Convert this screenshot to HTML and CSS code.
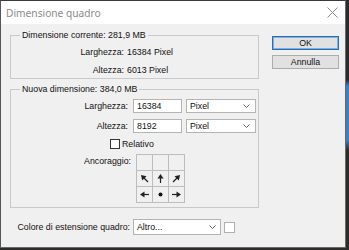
FILE: index.html
```html
<!DOCTYPE html>
<html lang="it">
<head>
<meta charset="utf-8">
<title>Dimensione quadro</title>
<link rel="stylesheet" href="styles.css">
</head>
<body>
<div class="dialog">
  <div class="titlebar">
    <span class="title">Dimensione quadro</span>
    <svg class="close" width="11" height="11" viewBox="0 0 11 11"><path d="M0.5 0.5L10.5 10.5M10.5 0.5L0.5 10.5" stroke="#8c8c8c" stroke-width="1" fill="none"/></svg>
  </div>
  <div class="content">
    <div class="main">
      <fieldset class="group g1">
        <legend>Dimensione corrente: 281,9 MB</legend>
        <div class="row"><span class="lbl">Larghezza:</span><span class="val">16384 Pixel</span></div>
        <div class="row row2"><span class="lbl">Altezza:</span><span class="val">6013 Pixel</span></div>
      </fieldset>
      <fieldset class="group g2">
        <legend>Nuova dimensione: 384,0 MB</legend>
        <div class="frow"><span class="flbl">Larghezza:</span><span class="input">16384</span><span class="select unit">Pixel<svg class="chev" width="7" height="4" viewBox="0 0 7 4"><path d="M0.5 0.5L3.5 3.5L6.5 0.5" fill="none" stroke="#606060"/></svg></span></div>
        <div class="frow frow2"><span class="flbl">Altezza:</span><span class="input">8192</span><span class="select unit">Pixel<svg class="chev" width="7" height="4" viewBox="0 0 7 4"><path d="M0.5 0.5L3.5 3.5L6.5 0.5" fill="none" stroke="#606060"/></svg></span></div>
        <div class="check"><span class="box"></span><span>Relativo</span></div>
        <div class="anchor">
          <span class="albl">Ancoraggio:</span>
          <div class="grid">
            <span class="cell"></span>
            <span class="cell"></span>
            <span class="cell"></span>
            <span class="cell"><svg width="11" height="11" viewBox="0 0 11 11"><path d="M9 9L4 4" stroke="#222" stroke-width="1.2"/><polygon points="2,2 7.5,3.2 3.2,7.5" fill="#222"/></svg></span>
            <span class="cell"><svg width="11" height="11" viewBox="0 0 11 11"><path d="M5.5 10L5.5 4" stroke="#222" stroke-width="1.2"/><polygon points="5.5,1 8.5,5.5 2.5,5.5" fill="#222"/></svg></span>
            <span class="cell"><svg width="11" height="11" viewBox="0 0 11 11"><path d="M2 9L7 4" stroke="#222" stroke-width="1.2"/><polygon points="9,2 3.5,3.2 7.8,7.5" fill="#222"/></svg></span>
            <span class="cell"><svg width="11" height="11" viewBox="0 0 11 11"><path d="M10 5.5L4 5.5" stroke="#222" stroke-width="1.2"/><polygon points="1,5.5 5.5,2.5 5.5,8.5" fill="#222"/></svg></span>
            <span class="cell"><svg width="11" height="11" viewBox="0 0 11 11"><circle cx="5.5" cy="5.5" r="2" fill="#111"/></svg></span>
            <span class="cell"><svg width="11" height="11" viewBox="0 0 11 11"><path d="M1 5.5L7 5.5" stroke="#222" stroke-width="1.2"/><polygon points="10,5.5 5.5,2.5 5.5,8.5" fill="#222"/></svg></span>
          </div>
        </div>
      </fieldset>
      <div class="ext">
        <span class="elbl">Colore di estensione quadro:</span>
        <span class="select ecolor">Altro...<svg class="chev" width="7" height="4" viewBox="0 0 7 4"><path d="M0.5 0.5L3.5 3.5L6.5 0.5" fill="none" stroke="#606060"/></svg></span>
        <span class="swatch"></span>
      </div>
    </div>
    <div class="buttons">
      <button class="btn ok" type="button">OK</button>
      <button class="btn" type="button">Annulla</button>
    </div>
  </div>
</div>
</body>
</html>
```

FILE: styles.css
```css
* { box-sizing: border-box; }
html, body { margin: 0; padding: 0; }
body {
  width: 349px;
  height: 250px;
  overflow: hidden;
  background: linear-gradient(to bottom, #2b2b2d 0, #2b2b2d 80px, #3a7fc4 86px, #3a7fc4 140px, #2e2c2b 150px, #2e2c2b 100%);
  font-family: "Liberation Sans", Arial, sans-serif;
  font-size: 8.8px;
  color: #111;
}
.dialog {
  width: 346px;
  height: 248px;
  border: 1px solid #6a6a6a;
  border-top-color: #3a3a3a;
  border-left-color: #555;
  background: #f0f0f0;
  display: flex;
  flex-direction: column;
}
.titlebar {
  height: 23px;
  flex: none;
  background: #fff;
  display: flex;
  align-items: center;
  justify-content: space-between;
  padding: 0 7px 0 5px;
}
.title {
  font-family: "Noto Sans", "Open Sans", sans-serif;
  font-size: 10.2px;
  color: #8a8a8a;
}
.close { display: block; }
.content {
  flex: 1;
  display: flex;
  padding: 6px 0 0 9px;
}
.main {
  width: 249px;
  display: flex;
  flex-direction: column;
}
.group {
  margin: 0;
  min-width: 0;
  border: 1px solid #c9c9c9;
}
.group legend {
  padding: 0 2px;
  height: 11px;
  line-height: 11px;
}
.g1 { padding: 5px 0 2px 9px; }
.row { display: flex; height: 12px; line-height: 12px; }
.row2 { margin-top: 6px; }
.lbl { width: 104px; text-align: right; }
.val { margin-left: 3px; }
.g2 { margin-top: 5px; padding: 4px 0 4px 9px; }
.frow { display: flex; align-items: center; height: 14px; }
.frow2 { margin-top: 6px; }
.flbl { width: 108px; margin-right: 5px; text-align: right; }
.input {
  width: 49px;
  height: 14px;
  line-height: 12px;
  padding-left: 3px;
  background: #fff;
  border: 1px solid #b4b4b4;
}
.select {
  display: flex;
  align-items: center;
  justify-content: space-between;
  height: 14px;
  padding: 0 5px 0 3px;
  background: #fff;
  border: 1px solid #b4b4b4;
}
.unit { width: 70px; margin-left: 4px; }
.chev { display: block; }
.check {
  display: flex;
  align-items: center;
  height: 11px;
  margin-top: 5px;
  padding-left: 90px;
}
.box {
  width: 10px;
  height: 10px;
  border: 1px solid #333;
  background: #fff;
  margin-right: 2px;
}
.anchor { display: flex; align-items: flex-start; margin-top: 5px; }
.albl { width: 111px; margin-right: 5px; text-align: right; line-height: 12px; margin-top: 1px; }
.grid {
  display: grid;
  grid-template-columns: repeat(3, 15px);
  grid-template-rows: repeat(3, 15px);
  gap: 1px;
  border: 1px solid #bdbdbd;
  background: #bdbdbd;
}
.cell {
  background: #f0f0f0;
  display: flex;
  align-items: center;
  justify-content: center;
}
.cell svg { display: block; }
.ext { display: flex; align-items: center; margin-top: 11px; height: 16px; }
.elbl { width: 120px; margin-right: 3px; text-align: right; }
.ecolor { width: 88px; height: 16px; padding-right: 4px; }
.swatch {
  width: 11px;
  height: 11px;
  margin-left: 3px;
  background: #fff;
  border: 1px solid #b0b0b0;
}
.buttons {
  width: 67px;
  margin-left: 13px;
  padding-top: 6px;
  display: flex;
  flex-direction: column;
  gap: 5px;
}
.btn {
  width: 67px;
  height: 14px;
  padding: 0;
  margin: 0;
  font: inherit;
  line-height: 12px;
  color: #111;
  background: #e1e1e1;
  border: 1px solid #adadad;
}
.btn.ok {
  border-color: #2a6db2;
  box-shadow: inset 0 0 0 1px #7fb0e0;
}
```
